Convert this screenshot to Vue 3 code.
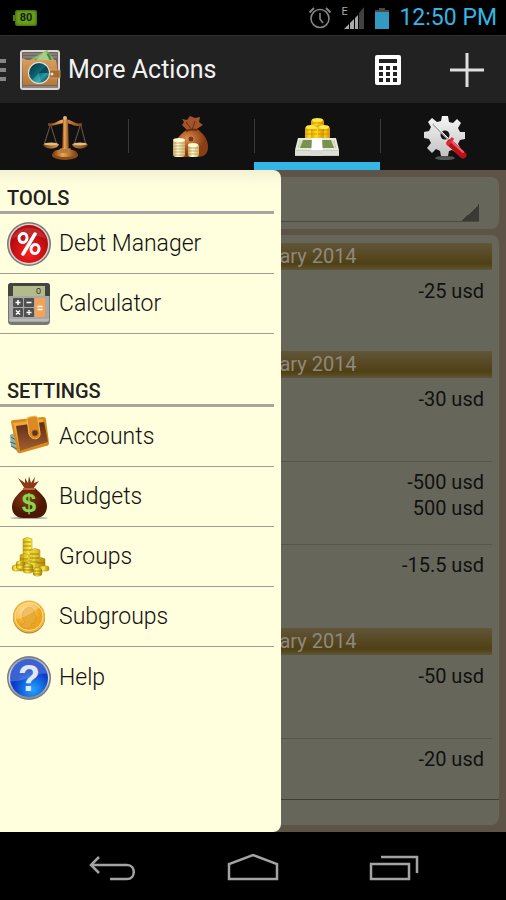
<script setup>
import { ref } from 'vue'

const activeTab = ref('actions')
const period = ref('all')

const tabs = [
  { id: 'balance', label: 'Balance' },
  { id: 'budgets', label: 'Budgets' },
  { id: 'actions', label: 'Transactions' },
  { id: 'settings', label: 'Settings' }
]

const sections = [
  {
    title: 'TOOLS',
    items: [
      { icon: 'percent', label: 'Debt Manager' },
      { icon: 'calculator', label: 'Calculator' }
    ]
  },
  {
    title: 'SETTINGS',
    items: [
      { icon: 'wallet', label: 'Accounts' },
      { icon: 'bag', label: 'Budgets' },
      { icon: 'stacks', label: 'Groups' },
      { icon: 'coin', label: 'Subgroups' },
      { icon: 'help', label: 'Help' }
    ]
  }
]

const days = [
  { date: 'January 2014', rows: [{ amounts: ['-25 usd'], short: true }] },
  {
    date: 'January 2014',
    rows: [
      { amounts: ['-30 usd'] },
      { amounts: ['-500 usd', '500 usd'] },
      { amounts: ['-15.5 usd'] }
    ]
  },
  {
    date: 'January 2014',
    rows: [{ amounts: ['-50 usd'] }, { amounts: ['-20 usd'], short: true }]
  }
]
</script>

<template>
  <div class="phone">
    <svg class="defs" width="0" height="0" aria-hidden="true">
      <defs>
        <linearGradient id="gold" x1="0" x2="1">
          <stop offset="0" stop-color="#7a3a0c" />
          <stop offset="0.4" stop-color="#e8a95a" />
          <stop offset="1" stop-color="#7d3c0e" />
        </linearGradient>
        <linearGradient id="coins" x1="0" x2="1">
          <stop offset="0" stop-color="#c99a06" />
          <stop offset="0.4" stop-color="#fff04e" />
          <stop offset="1" stop-color="#b58400" />
        </linearGradient>
        <linearGradient id="goldcoins" x1="0" x2="1">
          <stop offset="0" stop-color="#e0a400" />
          <stop offset="0.4" stop-color="#ffdd22" />
          <stop offset="1" stop-color="#d29400" />
        </linearGradient>
        <linearGradient id="palecoins" x1="0" x2="1">
          <stop offset="0" stop-color="#c9a860" />
          <stop offset="0.4" stop-color="#fffbd2" />
          <stop offset="1" stop-color="#d0b268" />
        </linearGradient>
        <linearGradient id="steel" x1="0" y1="0" x2="0" y2="1">
          <stop offset="0" stop-color="#f6f6f6" />
          <stop offset="1" stop-color="#c2c2c2" />
        </linearGradient>
        <linearGradient id="leather" x1="0" y1="0" x2="0" y2="1">
          <stop offset="0" stop-color="#d9a05f" />
          <stop offset="1" stop-color="#b87937" />
        </linearGradient>
        <linearGradient id="brown" x1="0" y1="0" x2="0" y2="1">
          <stop offset="0" stop-color="#5c2d16" />
          <stop offset="1" stop-color="#a3602f" />
        </linearGradient>
        <linearGradient id="ring" x1="0" y1="0" x2="0" y2="1">
          <stop offset="0" stop-color="#999" />
          <stop offset="0.5" stop-color="#ddd" />
          <stop offset="1" stop-color="#888" />
        </linearGradient>
        <radialGradient id="sack" cx="0.4" cy="0.35">
          <stop offset="0" stop-color="#e08c4c" />
          <stop offset="1" stop-color="#8a3d12" />
        </radialGradient>
        <radialGradient id="darksack" cx="0.4" cy="0.35">
          <stop offset="0" stop-color="#8c3a14" />
          <stop offset="1" stop-color="#4e1703" />
        </radialGradient>
        <radialGradient id="red" cx="0.5" cy="0.7">
          <stop offset="0" stop-color="#ff2020" />
          <stop offset="1" stop-color="#b80d10" />
        </radialGradient>
        <radialGradient id="blue" cx="0.6" cy="0.8">
          <stop offset="0" stop-color="#22a4ff" />
          <stop offset="1" stop-color="#0b3bc9" />
        </radialGradient>
        <radialGradient id="orange" cx="0.4" cy="0.3">
          <stop offset="0" stop-color="#ffdc70" />
          <stop offset="1" stop-color="#f0a41c" />
        </radialGradient>
        <linearGradient id="lens" x1="0" y1="0" x2="1" y2="1">
          <stop offset="0" stop-color="#0a2f3c" />
          <stop offset="0.5" stop-color="#0c6a78" />
          <stop offset="0.7" stop-color="#2a9aa2" />
          <stop offset="1" stop-color="#06202a" />
        </linearGradient>
      </defs>
    </svg>

    <div class="status">
      <span class="charge">80</span>
      <div class="status-right">
        <svg width="24" height="24" viewBox="0 0 24 24" fill="none" stroke="#858585">
          <circle cx="12" cy="12.500" r="9" stroke-width="1.600" />
          <path d="M12 7v6l3 4" stroke-width="1.600" />
          <path d="M1.500 6.500 6 2M22.500 6.500 18 2" stroke-width="2" />
        </svg>
        <div class="signal">
          <span class="network">E</span>
          <svg width="24" height="24" viewBox="0 0 24 24">
            <path d="M3 23 8 18v5zM9 17l4-4v10H9zM14 12l3-3v14h-3z" fill="#a9a9a9" />
            <path d="M18 7l5-6v22h-5z" fill="#414141" />
          </svg>
        </div>
        <svg width="16" height="24" viewBox="0 0 16 24">
          <path d="M5 2h6v2h4v3H1V4h4z" fill="#4c4644" />
          <path d="M1 6h14v17H1z" fill="#3399c1" />
        </svg>
        <span class="clock">12:50 PM</span>
      </div>
    </div>

    <header class="bar">
      <button class="home" aria-label="Open menu">
        <svg width="7" height="22" viewBox="0 0 7 22">
          <path d="M0 0h6v4H0zM0 9h6v4H0zM0 18h6v4H0z" fill="#858585" />
        </svg>
        <svg class="logo" width="42" height="42" viewBox="0 0 42 42">
          <rect x="1" y="1" width="40" height="40" rx="3" fill="#dcd6d2" />
          <rect x="3" y="3" width="36" height="36" rx="1" fill="#6c6661" />
          <path d="M4 5h34M4 8h34" stroke="#9d9690" />
          <path d="M9 12 28 1l8 11z" fill="#8db870" />
          <path d="M13 12 30 4l3 8z" fill="#4d8145" />
          <path d="M16 12 26 2l5 10" fill="#a9cc87" />
          <path d="M3 9l5 2h29l1 6v19H4z" fill="url(#leather)" />
          <path d="M31 21h10v8H31l-2-4z" fill="#a56a30" stroke="#e0ae72" stroke-width=".7" />
          <circle cx="33" cy="25" r="1.500" fill="#f5e6cc" />
          <circle cx="20" cy="24" r="11" fill="#e9e7e4" />
          <circle cx="20" cy="24" r="10" fill="url(#lens)" />
          <path d="M20 24 27 17a10 10 0 0 1 3 7z" fill="#0a3340" opacity=".7" />
          <path d="M20 24l-7 7a10 10 0 0 0 9 3z" fill="#5fd0cf" opacity=".35" />
          <path d="M4 37h34l1 2H3z" fill="#8a8582" />
        </svg>
      </button>
      <h1>More Actions</h1>
      <button class="tool" aria-label="Calculator">
        <svg width="28" height="32" viewBox="0 0 28 32">
          <rect x="1" y="1" width="26" height="30" rx="2" fill="#fff" />
          <path
            d="M5 5h18v4H5zM5 12h4v4H5zM12 12h4v4h-4zM19 12h4v4h-4zM5 18h4v4H5zM12 18h4v4h-4zM19 18h4v4h-4zM5 24h4v4H5zM12 24h4v4h-4zM19 24h4v4h-4z"
            fill="#222"
          />
        </svg>
      </button>
      <button class="tool" aria-label="Add">
        <svg width="34" height="34" viewBox="0 0 34 34">
          <path d="M15.500 0h3v15.500H34v3H18.500V34h-3V18.500H0v-3h15.500z" fill="#dedede" />
        </svg>
      </button>
    </header>

    <nav class="tabs">
      <button
        v-for="tab in tabs"
        :key="tab.id"
        class="tab"
        :class="{ active: tab.id === activeTab }"
        :aria-label="tab.label"
        @click="activeTab = tab.id"
      >
        <svg width="48" height="48" viewBox="0 0 48 48">
          <g v-if="tab.id === 'balance'">
            <path d="M9 11 3 30M10 11l6 19M39 11l-6 19M40 11l5 19" stroke="#7d6f5c" stroke-width=".8" />
            <path d="M7 8c7 2 9-3 17-4 8 1 10 6 17 4v3c-8 1-11-3-17-3S15 11 7 11z" fill="url(#gold)" />
            <circle cx="24" cy="3" r="2" fill="#e4b47a" />
            <path d="M22 5h5l1 32h-7z" fill="url(#gold)" />
            <path d="M2 29h16c-1 6-15 6-16 0zM31 29h16c-1 6-15 6-16 0z" fill="url(#gold)" />
            <ellipse cx="10" cy="29" rx="7" ry="1.500" fill="#e2bf85" />
            <ellipse cx="39" cy="29" rx="7" ry="1.500" fill="#e2bf85" />
            <path d="M19 33h11v5H19z" fill="url(#gold)" />
            <ellipse cx="24" cy="40" rx="13" ry="5" fill="#8c4c17" />
            <ellipse cx="24" cy="38" rx="12" ry="4" fill="url(#gold)" />
            <path d="M19 34h10v4H19z" fill="#b8793a" />
          </g>
          <g v-else-if="tab.id === 'budgets'">
            <path d="M15 4l5 1 3-4 5 2 5-1-1 5 4 3-8 5-7 1-6-6 2-3z" fill="#a4542a" />
            <path d="M19 7l6 8M28 6l-3 9" stroke="#6d2e10" />
            <path d="M21 14h9c6 4 11 10 11 18 0 7-4 10-12 10H17C9 42 6 38 7 31c1-7 8-13 14-17z" fill="url(#sack)" />
            <path d="M19 16c4-2 7-2 11-1" stroke="#6a2b0d" stroke-width="2" fill="none" />
            <circle cx="24" cy="24" r="3" fill="#7b3512" stroke="#c9834e" />
            <rect x="6" y="24" width="12" height="18" rx="3" fill="url(#palecoins)" />
            <rect x="21" y="29" width="11" height="13" rx="3" fill="url(#palecoins)" />
            <path d="M6 28h12M6 31h12M6 34h12M6 37h12M6 40h12M21 33h11M21 36h11M21 39h11" stroke="#b1924d" stroke-width=".7" />
            <ellipse cx="12" cy="25" rx="6" ry="2" fill="#fffbd4" />
            <ellipse cx="26" cy="30" rx="5" ry="2" fill="#fffbd4" />
          </g>
          <g v-else-if="tab.id === 'actions'">
            <rect x="12" y="11" width="12" height="14" rx="3" fill="url(#goldcoins)" />
            <rect x="25" y="11" width="12" height="14" rx="3" fill="url(#goldcoins)" />
            <rect x="18" y="4" width="13" height="20" rx="3" fill="url(#goldcoins)" />
            <path d="M18 8h13M18 11h13M12 15h12M12 19h12M25 15h12M25 19h12" stroke="#c78f00" stroke-width=".8" />
            <ellipse cx="24.500" cy="5" rx="5.500" ry="2" fill="#ffe648" />
            <ellipse cx="18" cy="12" rx="5" ry="2" fill="#ffe648" />
            <ellipse cx="31" cy="12" rx="5" ry="2" fill="#ffe648" />
            <path d="M5 23h38l3 12H2z" fill="#e6e9dc" />
            <path d="M7 25h34l2 8H5z" fill="#78914e" />
            <path d="M7 25h3l-3 8H5zM41 25h-3l3 8h2z" fill="#d8dfc5" />
            <path d="M2 35h44v6H2z" fill="#c7cbbd" />
            <path d="M2 37h44M2 39h44" stroke="#f4f5ee" />
            <path d="M19 23h10l1 18H18z" fill="#fff" />
            <path d="M18 35h12v6H18z" fill="#d9d9d9" />
          </g>
          <g v-else transform="translate(2 0)">
            <ellipse cx="24" cy="43" rx="10" ry="2" fill="#555" />
            <path
              d="M21 1h6l1 6 4 1 4-4 4 4-3 5 2 4h5v7l-5 1-2 4 3 5-4 4-5-3-3 1-1 5h-7l-1-5-4-2-4 4-5-5 4-5-2-4-5-1v-6l5-1 2-4-3-5 4-4 5 4 4-1z"
              fill="url(#steel)"
            />
            <circle cx="24" cy="20" r="4.500" fill="#171717" />
            <path d="M12 9 27 24" stroke="#a9a9a9" stroke-width="2" />
            <path d="M13 9 27 23" stroke="#fff" />
            <path d="M29 28 42 40" stroke="#b91019" stroke-width="7" stroke-linecap="round" />
            <path d="M30 26 42 37" stroke="#f0606a" stroke-width="2" stroke-linecap="round" />
            <path d="M26 30 32 23" stroke="#e22b36" stroke-width="3" />
          </g>
        </svg>
      </button>
    </nav>

    <main class="content">
      <div class="card filter">
        <select v-model="period" aria-label="Period">
          <option value="all">All</option>
          <option value="month">Month</option>
        </select>
      </div>

      <div class="card ledger">
        <div class="list">
          <section v-for="(day, d) in days" :key="d">
            <h2 class="date">{{ day.date }}</h2>
            <div v-for="(row, i) in day.rows" :key="i" class="row" :class="{ short: row.short }">
              <div v-for="amount in row.amounts" :key="amount">{{ amount }}</div>
            </div>
          </section>
        </div>
      </div>

      <aside class="drawer">
        <section v-for="section in sections" :key="section.title" class="group">
          <h2>{{ section.title }}</h2>
          <button v-for="item in section.items" :key="item.label" class="item">
            <svg width="44" height="44" viewBox="0 0 44 44">
              <g v-if="item.icon === 'percent'">
                <circle cx="22" cy="22" r="22" fill="#777" />
                <circle cx="22" cy="22" r="20.500" fill="#d8d2cc" />
                <circle cx="22" cy="22" r="19" fill="url(#red)" />
                <path d="M5 17C9 2 35 2 39 17c-9-5-25-5-34 0z" fill="#fff" opacity=".12" />
                <g fill="none" stroke="#fff">
                  <ellipse cx="16" cy="16" rx="4" ry="4.500" stroke-width="3" transform="rotate(10 16 16)" />
                  <ellipse cx="28" cy="27" rx="4" ry="4.500" stroke-width="3" transform="rotate(10 28 27)" />
                  <path d="M28 12 16 32" stroke-width="3.500" stroke-linecap="round" />
                </g>
              </g>
              <g v-else-if="item.icon === 'calculator'">
                <rect x="1" y="1" width="42" height="42" rx="4" fill="#777" />
                <rect x="2" y="12" width="40" height="28" rx="2" fill="#a7a7a7" />
                <path d="M4 1h36q3 0 3 3v10H1V4q0-3 3-3z" fill="#43433f" />
                <rect x="6" y="4" width="32" height="10" fill="#b4bb8b" />
                <text x="29" y="12" class="lcd">0</text>
                <rect x="6" y="16" width="10" height="9" rx="1" fill="#505050" />
                <rect x="17" y="16" width="10" height="9" rx="1" fill="#505050" />
                <rect x="6" y="26" width="10" height="9" rx="1" fill="#505050" />
                <rect x="17" y="26" width="10" height="9" rx="1" fill="#505050" />
                <rect x="28" y="16" width="10" height="19" rx="1" fill="#f5a353" />
                <path
                  d="M8.500 20.500h5M11 18v5M19.500 20.500h5M9 28.500l4 4M13 28.500l-4 4M19.500 30.500h5M22 28v1.500M22 31.500V33M30.500 24.500h5M30.500 27.500h5"
                  stroke="#fff"
                  stroke-width="1.500"
                />
                <path d="M2 38h40" stroke="#ccc" />
              </g>
              <g v-else-if="item.icon === 'wallet'">
                <path d="M3 20l6-3 2 20-7-6z" fill="#8fb0a4" />
                <path d="M4 22l5 3M3 27l6 2M4 31l6 3" stroke="#44655c" />
                <path d="M4 7q0-2 3-2L36 2q3 0 3 3l3 23q0 3-3 3L14 38q-4 1-4-3z" fill="#d98a1c" />
                <path d="M6 8 36 4l3 24-26 8z" fill="#efa739" />
                <path d="M9 11 37 7l4 20-28 9z" fill="url(#brown)" />
                <path d="M20 4q0-2 3-2l5-1q2 0 3 3l2 14c1 7-9 8-11 1z" fill="#dc8b22" stroke="#f6bb55" />
                <circle cx="28" cy="18" r="3" fill="#633313" stroke="#9c5b20" />
              </g>
              <g v-else-if="item.icon === 'bag'">
                <ellipse cx="22" cy="43" rx="19" ry="1" fill="#aaa" />
                <path d="M11 3l7 5 0-5 3 5 1-7 2 7 4-6-1 6 5-2-6 8h-8z" fill="#8a3c1a" />
                <path d="M17 13h11c5 5 12 10 12 18 0 8-5 12-11 12H16C9 43 5 38 5 32c0-9 8-14 12-19z" fill="url(#darksack)" />
                <path d="M16 14h12" stroke="#c7622d" stroke-width="2" />
                <text x="22" y="37" class="dollar">$</text>
              </g>
              <g v-else-if="item.icon === 'stacks'">
                <g fill="url(#coins)" stroke="#a98a0c" stroke-width=".5">
                  <path d="M16 4q4-3 9 0v22h-9zM23 15q5-3 10 0v18H23zM13 20q5-3 9 0v16h-9zM29 24q5-3 9 0v10h-9z" />
                  <rect x="5" y="30" width="9" height="6" rx="3" />
                  <rect x="9" y="26" width="9" height="8" rx="3" />
                  <rect x="16" y="29" width="10" height="9" rx="3" />
                  <rect x="32" y="31" width="10" height="5" rx="2" />
                  <rect x="26" y="33" width="9" height="8" rx="3" />
                </g>
                <path
                  d="M16 7h8M16 11h8M16 15h8M23 19h9M23 23h9M23 27h9M13 24h8M13 28h8M30 28h8M16 32h10M16 35h10M26 36h9M26 39h9M9 30h9"
                  stroke="#8f7308"
                  stroke-width=".8"
                />
              </g>
              <g v-else-if="item.icon === 'coin'">
                <circle cx="22" cy="22.500" r="16" fill="#a9803c" />
                <circle cx="22" cy="21.500" r="16" fill="#efb13d" />
                <circle cx="22" cy="21.500" r="14" fill="url(#orange)" stroke="#fbe08f" />
                <path d="M18 14q5-4 9 1l1 5 2 3-2 1v4l-4 1 1 3q-6 3-11-1l4-4c-4-4-4-9 0-13z" fill="#e8aa32" stroke="#d59426" stroke-width=".6" />
                <path d="M8 24C16 24 27 17 33 12 26 3 8 8 8 24z" fill="#fff" opacity=".25" />
              </g>
              <g v-else>
                <circle cx="22" cy="22" r="22" fill="#747d8a" />
                <circle cx="22" cy="22" r="20.500" fill="url(#ring)" />
                <circle cx="22" cy="22" r="19" fill="url(#blue)" />
                <path d="M3 22C3-3 41-3 41 18 30 15 18 27 3 25z" fill="#fff" opacity=".2" />
                <text x="22" y="35" class="question">?</text>
              </g>
            </svg>
            <span>{{ item.label }}</span>
          </button>
        </section>
      </aside>
    </main>

    <footer class="navbar">
      <button aria-label="Back">
        <svg width="48" height="32" viewBox="0 0 48 32" fill="none" stroke="#a3a3a3" stroke-width="2.500">
          <path d="M3 13h36c9 0 9 14 0 14H22" />
          <path d="M11 5 3 13l8 8" />
        </svg>
      </button>
      <button aria-label="Home">
        <svg width="52" height="32" viewBox="0 0 52 32" fill="none" stroke="#a3a3a3" stroke-width="2.500">
          <path d="M2 27V12L26 3l24 9v15z" />
        </svg>
      </button>
      <button aria-label="Recent apps">
        <svg width="50" height="32" viewBox="0 0 50 32" fill="none" stroke="#a3a3a3" stroke-width="2.500">
          <path d="M2 12h38v15H2zM12 5h36v16" />
        </svg>
      </button>
    </footer>
  </div>
</template>

<style>
body {
  margin: 0;
  background: #000;
}
</style>

<style scoped>
.phone {
  display: flex;
  flex-direction: column;
  height: 100vh;
  background: #000;
  font-family: Roboto, "Liberation Sans", sans-serif;
  color: #111;
}

.defs {
  position: absolute;
}

.phone svg {
  display: block;
  flex: none;
}

button {
  padding: 0;
  border: 0;
  background: none;
  font: inherit;
  color: inherit;
  cursor: pointer;
}

h1,
h2 {
  margin: 0;
}

.status {
  display: flex;
  align-items: center;
  justify-content: space-between;
  height: 35px;
  padding: 0 9px 0 15px;
}

.charge {
  position: relative;
  width: 22px;
  border-radius: 3px;
  background: #699c1c;
  box-shadow: inset 0 0 2px 1px #3d6a08;
  color: #14230a;
  font-size: 11px;
  font-weight: 700;
  line-height: 16px;
  text-align: center;
}

.charge::before {
  content: "";
  position: absolute;
  left: -2px;
  top: 5px;
  width: 2px;
  height: 6px;
  background: #4f7f12;
}

.status-right {
  display: flex;
  align-items: center;
  gap: 9px;
}

.signal {
  position: relative;
}

.network {
  position: absolute;
  left: 0;
  top: 0;
  color: #a9a9a9;
  font-size: 11px;
  line-height: 11px;
}

.clock {
  color: #33b5e5;
  font-size: 23px;
  line-height: 28px;
}

.bar {
  display: flex;
  align-items: center;
  height: 67px;
  padding-right: 22px;
  border-top: 1px solid #303030;
  background: #222;
}

.home {
  display: flex;
  align-items: center;
  gap: 12px;
}

.bar h1 {
  flex: 1;
  margin-left: 7px;
  color: #f3f3f3;
  font-size: 25px;
  font-weight: 400;
  line-height: 32px;
}

.tool + .tool {
  margin-left: 48px;
}

.tabs {
  display: grid;
  grid-template-columns: repeat(4, 1fr);
  height: 67px;
  padding-left: 2px;
  background: #111;
}

.tab {
  position: relative;
  display: flex;
  justify-content: center;
  padding-top: 12px;
}

.tab + .tab::before {
  content: "";
  position: absolute;
  left: 0;
  top: 16px;
  height: 34px;
  border-left: 1px solid #3a3a3a;
}

.tab.active {
  box-shadow: inset 0 -8px #33b5e5;
}

.content {
  position: relative;
  display: flex;
  flex: 1;
  flex-direction: column;
  gap: 6px;
  min-height: 0;
  padding: 7px;
  background: #5e5347;
}

.card {
  border-radius: 8px;
  background: #66675a;
}

.filter {
  padding: 7px 20px 7px 8px;
}

.filter select {
  display: block;
  width: 100%;
  height: 38px;
  border: 0;
  border-bottom: 1px solid #4c4b42;
  border-radius: 0;
  appearance: none;
  background: linear-gradient(135deg, transparent 50%, #3a3934 50%) right bottom / 17px 17px no-repeat;
  color: #111;
  font: 20px Roboto, sans-serif;
}

.ledger {
  display: flex;
  flex: 1;
  flex-direction: column;
  min-height: 0;
  padding: 8px 0 25px;
}

.list {
  flex: 1;
  overflow: hidden;
  padding: 0 7px;
  border-bottom: 1px solid #3e3e34;
}

.date {
  margin-bottom: 1px;
  padding-left: 18%;
  background: linear-gradient(#62563a, #4f4014 75%, #54461d 85%, #5f5639);
  color: #90887d;
  font-size: 20px;
  font-weight: 400;
  line-height: 27px;
  text-align: center;
}

.row {
  box-sizing: border-box;
  height: 83px;
  padding: 7px 8px 0;
  font-size: 20px;
  line-height: 26px;
  text-align: right;
}

.row.short {
  height: 80px;
}

.row:not(:last-child) {
  border-bottom: 1px solid #56574b;
}

.drawer {
  position: absolute;
  left: 0;
  top: 0;
  bottom: 0;
  box-sizing: border-box;
  width: 281px;
  padding-right: 7px;
  border-radius: 0 8px 8px 0;
  background: linear-gradient(#f3f1d3, #ffffdd 16px);
}

.group + .group {
  margin-top: 29px;
}

.group h2 {
  padding: 16px 7px 1px;
  border-bottom: 3px solid #aaa69f;
  color: #222;
  font-size: 20px;
  font-weight: 500;
  line-height: 24px;
}

.item {
  display: flex;
  align-items: center;
  gap: 8px;
  box-sizing: border-box;
  width: 100%;
  height: 60px;
  padding: 1px 0 0 7px;
  font-size: 23px;
  font-weight: 300;
  line-height: 28px;
}

.item:not(:last-child),
.group:first-child .item {
  border-bottom: 1px solid #a09e92;
}

.lcd {
  fill: #2d3021;
  font: 9px "Liberation Sans", sans-serif;
}

.dollar {
  fill: #83d84b;
  font: bold 26px "Liberation Sans", sans-serif;
  text-anchor: middle;
}

.question {
  fill: #e3e7ef;
  font: bold 36px "Liberation Sans", sans-serif;
  text-anchor: middle;
}

.navbar {
  display: grid;
  grid-template-columns: repeat(3, 1fr);
  box-sizing: border-box;
  height: 68px;
  padding: 3px 42px 0;
}

.navbar button {
  display: flex;
  align-items: center;
  justify-content: center;
}
</style>
